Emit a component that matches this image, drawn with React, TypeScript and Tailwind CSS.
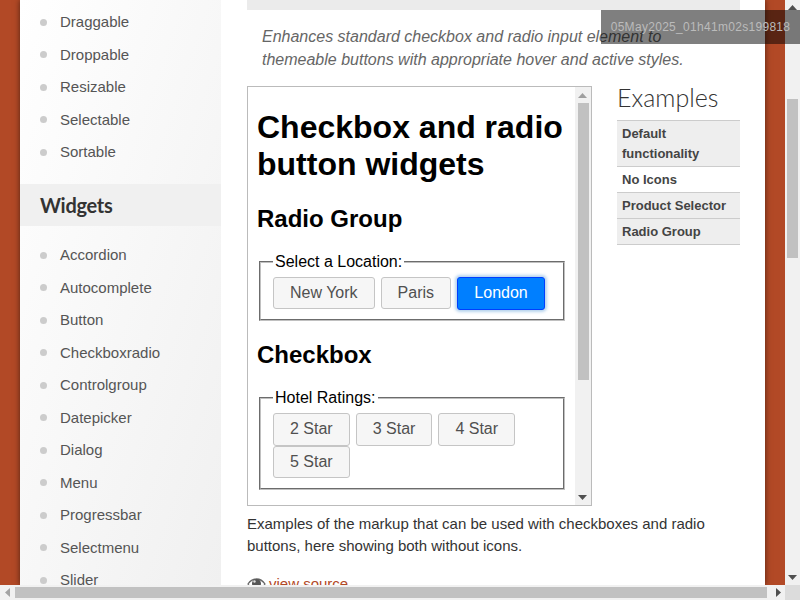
import React from "react";

const nav1 = ["Draggable", "Droppable", "Resizable", "Selectable", "Sortable"];
const nav2 = ["Accordion", "Autocomplete", "Button", "Checkboxradio", "Controlgroup", "Datepicker", "Dialog", "Menu", "Progressbar", "Selectmenu", "Slider"];
const sans = "font-['Liberation_Sans',Arial,sans-serif]";

function NavItem({ label }: { label: string }) {
  return (
    <li className="flex h-[32.5px] items-center pl-5 text-[15px] text-[#555]">
      <span className="mr-[13px] h-[7px] w-[7px] rounded-full bg-[#ccc]" />
      <span>{label}</span>
    </li>
  );
}

function Btn({ label, active }: { label: string; active?: boolean }) {
  return (
    <button
      className={
        active
          ? "h-[33px] w-[88px] rounded-[3px] border border-[#003eff] bg-[#007fff] text-base text-white shadow-[0_0_3px_2px_rgba(94,158,214,0.45)]"
          : "h-[32.5px] rounded-[3px] border border-[#c5c5c5] bg-[#f6f6f6] px-4 text-base text-[#505050]"
      }
    >
      {label}
    </button>
  );
}

function Group({ legend, items, active, cls }: { legend: string; items: string[]; active?: string; cls: string }) {
  return (
    <fieldset className={"mx-0.5 mt-5 border-2 border-[#c0c0c0] px-3 [border-style:groove] " + cls}>
      <legend className="px-0.5 text-base leading-[18px] text-black">{legend}</legend>
      <div className="flex flex-wrap gap-x-1.5">
        {items.map((i) => (
          <Btn key={i} label={i} active={i === active} />
        ))}
      </div>
    </fieldset>
  );
}

const Up = () => (
  <svg width="9" height="5" viewBox="0 0 9 5" className="fill-[#505050]"><path d="M4.5 0 9 5H0z" /></svg>
);
const Down = () => (
  <svg width="9" height="5" viewBox="0 0 9 5" className="fill-[#505050]"><path d="M0 0h9L4.5 5z" /></svg>
);

export default function App() {
  return (
    <div className={"relative flex h-[600px] w-[800px] flex-col overflow-hidden bg-white " + sans}>
      <div className="flex h-[585px] w-full">
        <div className="h-full w-[785px] overflow-hidden bg-[#b24926] px-5">
          <div className="flex h-full w-[745px] bg-white shadow-[0_0_6px_rgba(0,0,0,0.55)]">
            <aside className="h-full w-[201px] shrink-0 overflow-hidden bg-linear-to-br from-white to-[#f0f0f0] pt-[6px]">
              <ul>{nav1.map((n) => <NavItem key={n} label={n} />)}</ul>
              <h3 className="mt-[15.5px] flex h-[42px] items-center bg-[#f0f0f0] pl-5 font-['Lato',sans-serif] text-[20px] font-bold tracking-[-0.3px] text-[#333]">
                Widgets
              </h3>
              <ul className="mt-[13px]">{nav2.map((n) => <NavItem key={n} label={n} />)}</ul>
            </aside>
            <main className="h-full min-w-0 flex-1 overflow-hidden pl-[26px] pr-[25px]">
              <div className="h-2.5 bg-[#ebebeb]" />
              <p className="ml-[15px] mt-[15px] text-base leading-[23px] text-[#666] italic">
                Enhances standard checkbox and radio input element to themeable buttons with appropriate hover and active styles.
              </p>
              <div className="mt-[15px] flex items-start">
                <div className="flex h-[420px] w-[345px] shrink-0 border border-[#bbb] bg-white">
                  <div className="h-full w-[327px] overflow-hidden pl-[9px] pr-2">
                    <h1 className="mt-[22px] text-[32px] font-bold leading-[37px] text-black">Checkbox and radio button widgets</h1>
                    <h2 className="mt-[22px] text-2xl leading-[28px] font-bold text-black">Radio Group</h2>
                    <Group cls="pb-[9px] pt-[5.6px]" legend="Select a Location:" items={["New York", "Paris", "London"]} active="London" />
                    <h2 className="mt-5 text-2xl leading-[28px] font-bold text-black">Checkbox</h2>
                    <Group cls="pb-[10px] pt-[6.6px]" legend="Hotel Ratings:" items={["2 Star", "3 Star", "4 Star", "5 Star"]} />
                  </div>
                  <div className="flex h-full w-[16px] flex-col items-center bg-[#f1f1f1]">
                    <div className="flex h-4 items-center justify-center pr-px opacity-50"><Up /></div>
                    <div className="h-[277px] w-[11px] bg-[#c1c1c1]" />
                    <div className="mt-auto flex h-4 items-center justify-center pr-px"><Down /></div>
                  </div>
                </div>
                <div className="ml-[25px] w-[123px] shrink-0">
                  <h3 className="-mt-px font-['Lato',sans-serif] text-[25px] font-light leading-[24px] text-[#333]">Examples</h3>
                  <ul className="mt-[11px] border-b border-[#ccc] text-[13px] font-bold text-[#444]">
                    <li className="h-[46px] border-t border-[#ccc] bg-[#eee] px-[5px] pt-[3px] leading-[20px]">Default functionality</li>
                    <li className="h-[26px] border-t border-[#ccc] px-[5px] leading-[25px]">No Icons</li>
                    <li className="h-[26px] border-t border-[#ccc] bg-[#eee] px-[5px] leading-[25px]">Product Selector</li>
                    <li className="h-[26px] border-t border-[#ccc] bg-[#eee] px-[5px] leading-[25px]">Radio Group</li>
                  </ul>
                </div>
              </div>
              <p className="mt-[7px] text-[15px] leading-[22px] text-[#333]">
                Examples of the markup that can be used with checkboxes and radio buttons, here showing both without icons.
              </p>
              <p className="mt-[16px] flex items-start text-[15px] leading-[22px] text-[#b24926]">
                <svg width="19" height="14" viewBox="0 0 19 14" className="mr-[3px] mt-1">
                  <path d="M1 7c2-3 5-5 8.5-5S16 4 18 7c-2 3-5 5-8.5 5S3 10 1 7z" fill="none" stroke="#666" strokeWidth="1.3" />
                  <circle cx="9.5" cy="6.5" r="4.5" fill="#555" />
                  <circle cx="7.5" cy="4.5" r="1.2" fill="#ddd" />
                </svg>
                <span className="underline">view source</span>
              </p>
            </main>
          </div>
        </div>
        <div className="flex h-full w-[15px] flex-col items-center bg-[#f1f1f1]">
          <div className="flex h-[15px] items-center justify-center"><Up /></div>
          <div className="mt-[84px] h-[159px] w-[11px] bg-[#c1c1c1]" />
          <div className="mt-auto flex h-[15px] items-center justify-center"><Down /></div>
        </div>
      </div>
      <div className="flex h-[15px] w-full items-center bg-[#f1f1f1]">
        <div className="flex h-[15px] w-[15px] items-center justify-center">
          <svg width="5" height="9" viewBox="0 0 5 9" className="fill-[#a3a3a3]"><path d="M5 0v9L0 4.5z" /></svg>
        </div>
        <div className="h-[11px] w-[752px] bg-[#c1c1c1]" />
        <div className="flex h-[15px] w-[18px] items-center justify-center pl-1">
          <svg width="5" height="9" viewBox="0 0 5 9" className="fill-[#505050]"><path d="M0 0l5 4.5L0 9z" /></svg>
        </div>
        <div className="h-[15px] flex-1 bg-[#dcdcdc]" />
      </div>
      <div className="absolute right-0 top-2.5 flex h-[34px] w-[199px] items-center justify-center bg-black/50 text-xs tracking-[0.3px] text-[#bbb]">
        05May2025_01h41m02s199818
      </div>
    </div>
  );
}
